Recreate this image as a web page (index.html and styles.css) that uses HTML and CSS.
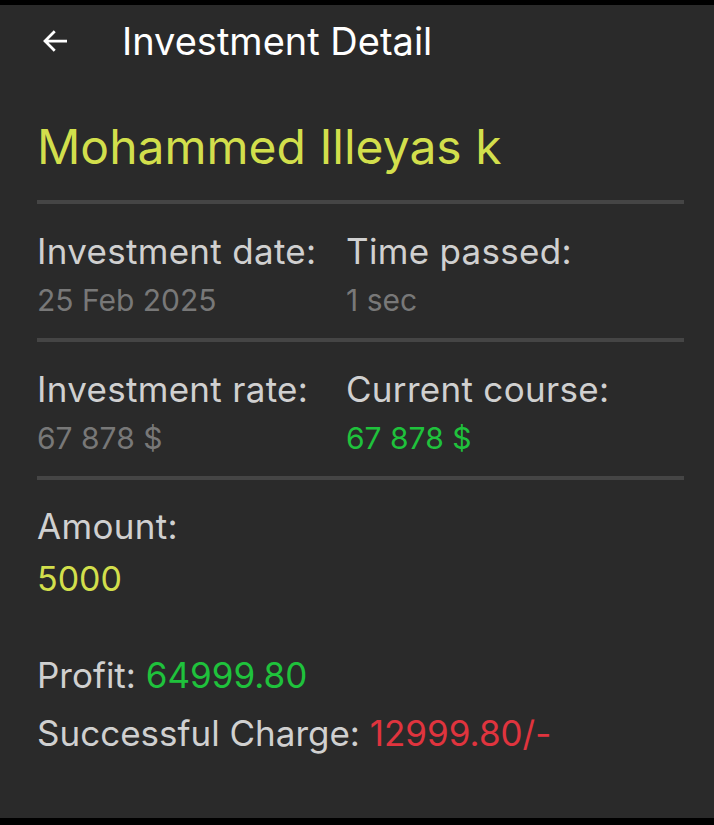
FILE: index.html
```html
<!DOCTYPE html>
<html lang="en">
<head>
    <meta charset="UTF-8">
    <meta name="viewport" content="width=device-width, initial-scale=1.0">
    <title>Investment Detail</title>
    <link rel="stylesheet" href="styles.css">
</head>
<body>
    <div class="screen">
        <header class="app-bar">
            <a href="#" class="back-btn" aria-label="Back">
                <svg width="30" height="30" viewBox="0 0 24 24">
                    <path d="M20.5 12H4.5M11 5L4 12L11 19" fill="none" stroke="#fff" stroke-width="2.2" stroke-linecap="square"/>
                </svg>
            </a>
            <h1 class="app-title">Investment Detail</h1>
        </header>

        <main class="content">
            <h2 class="investor-name">Mohammed Illeyas k</h2>
            <div class="divider"></div>

            <div class="info-row">
                <div class="info-col">
                    <div class="label">Investment date:</div>
                    <div class="value">25 Feb 2025</div>
                </div>
                <div class="info-col">
                    <div class="label">Time passed:</div>
                    <div class="value">1 sec</div>
                </div>
            </div>
            <div class="divider"></div>

            <div class="info-row">
                <div class="info-col">
                    <div class="label">Investment rate:</div>
                    <div class="value">67 878 $</div>
                </div>
                <div class="info-col">
                    <div class="label">Current course:</div>
                    <div class="value green">67 878 $</div>
                </div>
            </div>
            <div class="divider"></div>

            <div class="amount-block">
                <div class="label">Amount:</div>
                <div class="amount">5000</div>
            </div>

            <div class="summary">
                <div class="summary-line">Profit: <span class="green">64999.80</span></div>
                <div class="summary-line">Successful Charge: <span class="red">12999.80/-</span></div>
            </div>
        </main>
    </div>
</body>
</html>
```

FILE: styles.css
```css
* {
    margin: 0;
    padding: 0;
    box-sizing: border-box;
}

body {
    font-family: 'Inter', 'Roboto', sans-serif;
    background-color: #000;
    width: 714px;
    height: 825px;
    overflow: hidden;
}

.screen {
    margin-top: 5px;
    height: 813px;
    background-color: #2a2a2a;
    color: #d0d0d0;
}

.app-bar {
    display: flex;
    align-items: center;
    height: 72px;
    padding-left: 40px;
}

.back-btn {
    display: flex;
    width: 30px;
    height: 30px;
}

.app-title {
    margin-left: 52px;
    font-size: 38px;
    font-weight: 400;
    line-height: 44px;
    color: #fff;
}

.content {
    padding: 41px 30px 0 37px;
}

.investor-name {
    font-size: 48px;
    font-weight: 400;
    line-height: 58px;
    color: #d2df4c;
}

.divider {
    height: 4px;
    background-color: #454545;
}

.investor-name + .divider {
    margin-top: 24px;
}

.info-row {
    display: grid;
    grid-template-columns: 309px 1fr;
    padding: 27px 0 18px;
}

.label {
    font-size: 35px;
    letter-spacing: 0.3px;
    line-height: 40px;
    color: #d0d0d0;
}

.value {
    margin-top: 9px;
    font-size: 30px;
    line-height: 40px;
    color: #787878;
}

.amount-block {
    padding-top: 26px;
}

.amount {
    margin-top: 13px;
    font-size: 34px;
    line-height: 40px;
    color: #d2df4c;
}

.summary {
    display: flex;
    flex-direction: column;
    gap: 18px;
    margin-top: 56px;
}

.summary-line {
    font-size: 35px;
    line-height: 40px;
    color: #d0d0d0;
}

.green {
    color: #1fc23c;
}

.red {
    color: #e0343e;
}
```
